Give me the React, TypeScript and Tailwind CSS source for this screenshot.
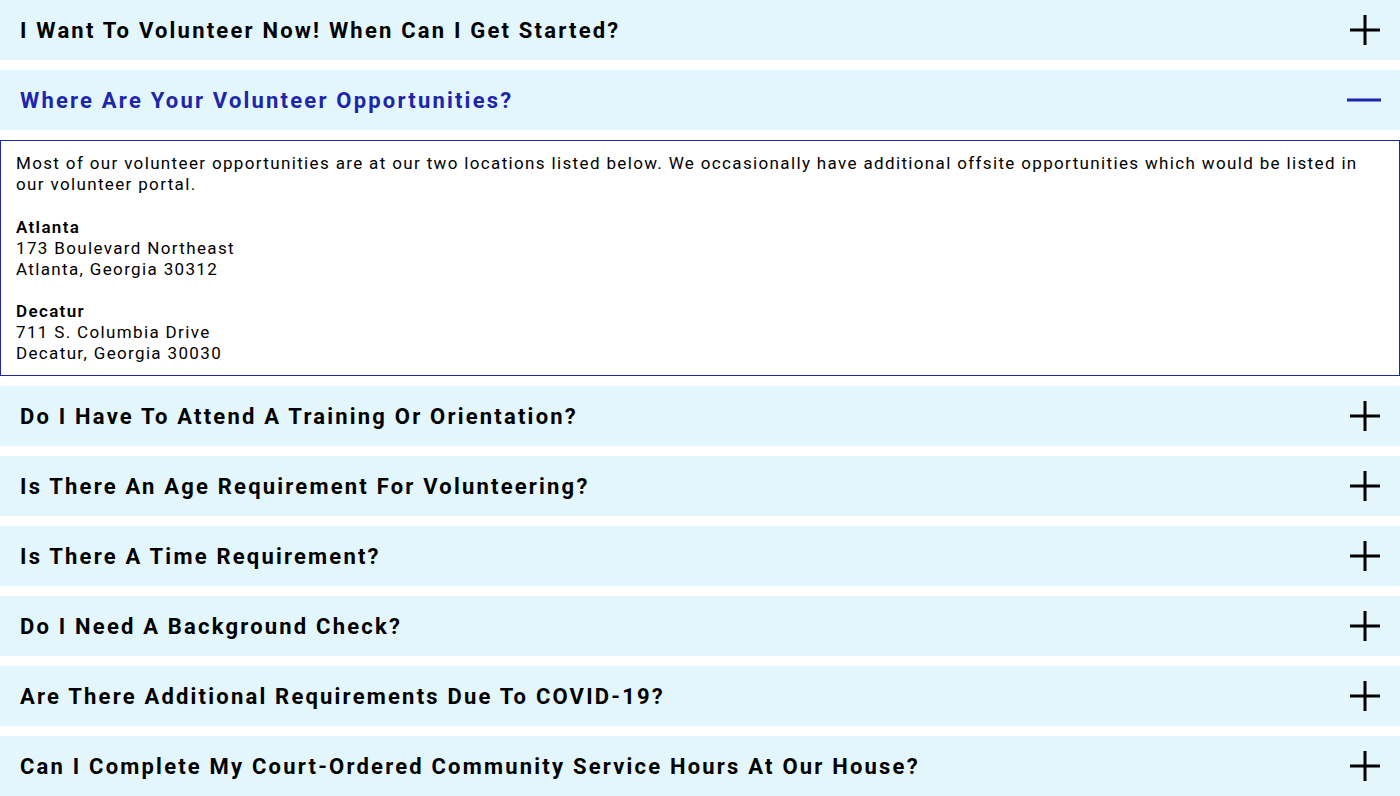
import { useState } from 'react';

type Item = {
  question: string;
  answer?: React.ReactNode;
};

const items: Item[] = [
  { question: 'I Want To Volunteer Now! When Can I Get Started?' },
  {
    question: 'Where Are Your Volunteer Opportunities?',
    answer: (
      <>
        <p>
          Most of our volunteer opportunities are at our two locations listed
          below. We occasionally have additional offsite opportunities which
          would be listed in our volunteer portal.
        </p>
        <p className="mt-[22px]">
          <strong className="font-semibold">Atlanta</strong>
          <br />
          173 Boulevard Northeast
          <br />
          Atlanta, Georgia 30312
        </p>
        <p className="mt-[21px]">
          <strong className="font-semibold">Decatur</strong>
          <br />
          711 S. Columbia Drive
          <br />
          Decatur, Georgia 30030
        </p>
      </>
    ),
  },
  { question: 'Do I Have To Attend A Training Or Orientation?' },
  { question: 'Is There An Age Requirement For Volunteering?' },
  { question: 'Is There A Time Requirement?' },
  { question: 'Do I Need A Background Check?' },
  { question: 'Are There Additional Requirements Due To COVID-19?' },
  { question: 'Can I Complete My Court-Ordered Community Service Hours At Our House?' },
];

const PlusIcon = () => (
  <svg width="32" height="32" viewBox="0 0 32 32" fill="none">
    <path d="M16 1v30M1 16h30" stroke="currentColor" strokeWidth="3" />
  </svg>
);

const MinusIcon = () => (
  <svg width="34" height="32" viewBox="0 0 34 32" fill="none">
    <path d="M0 16h34" stroke="currentColor" strokeWidth="3" />
  </svg>
);

export default function App() {
  const [open, setOpen] = useState(1);

  return (
    <div
      className="w-[1400px] bg-white"
      style={{ fontFamily: 'Roboto, "Noto Sans", sans-serif' }}
    >
      {items.map((item, i) => {
        const isOpen = open === i;
        return (
          <div key={item.question} className="mb-[10px]">
            <button
              onClick={() => setOpen(isOpen ? -1 : i)}
              className={`flex h-[60px] w-full items-center justify-between bg-[#e3f6fb] pl-5 pr-[19px] text-left ${
                isOpen ? 'text-[#1c25ab]' : 'text-black'
              }`}
            >
              <span className="text-[22px] font-bold tracking-[2.2px]">
                {item.question}
              </span>
              {isOpen ? <MinusIcon /> : <PlusIcon />}
            </button>
            {isOpen && item.answer && (
              <div className="mt-[10px] h-[236px] border border-[#1c25ab] px-[15px] pt-[12px] text-[17px] leading-[21px] tracking-[1.35px] text-black">
                {item.answer}
              </div>
            )}
          </div>
        );
      })}
    </div>
  );
}
